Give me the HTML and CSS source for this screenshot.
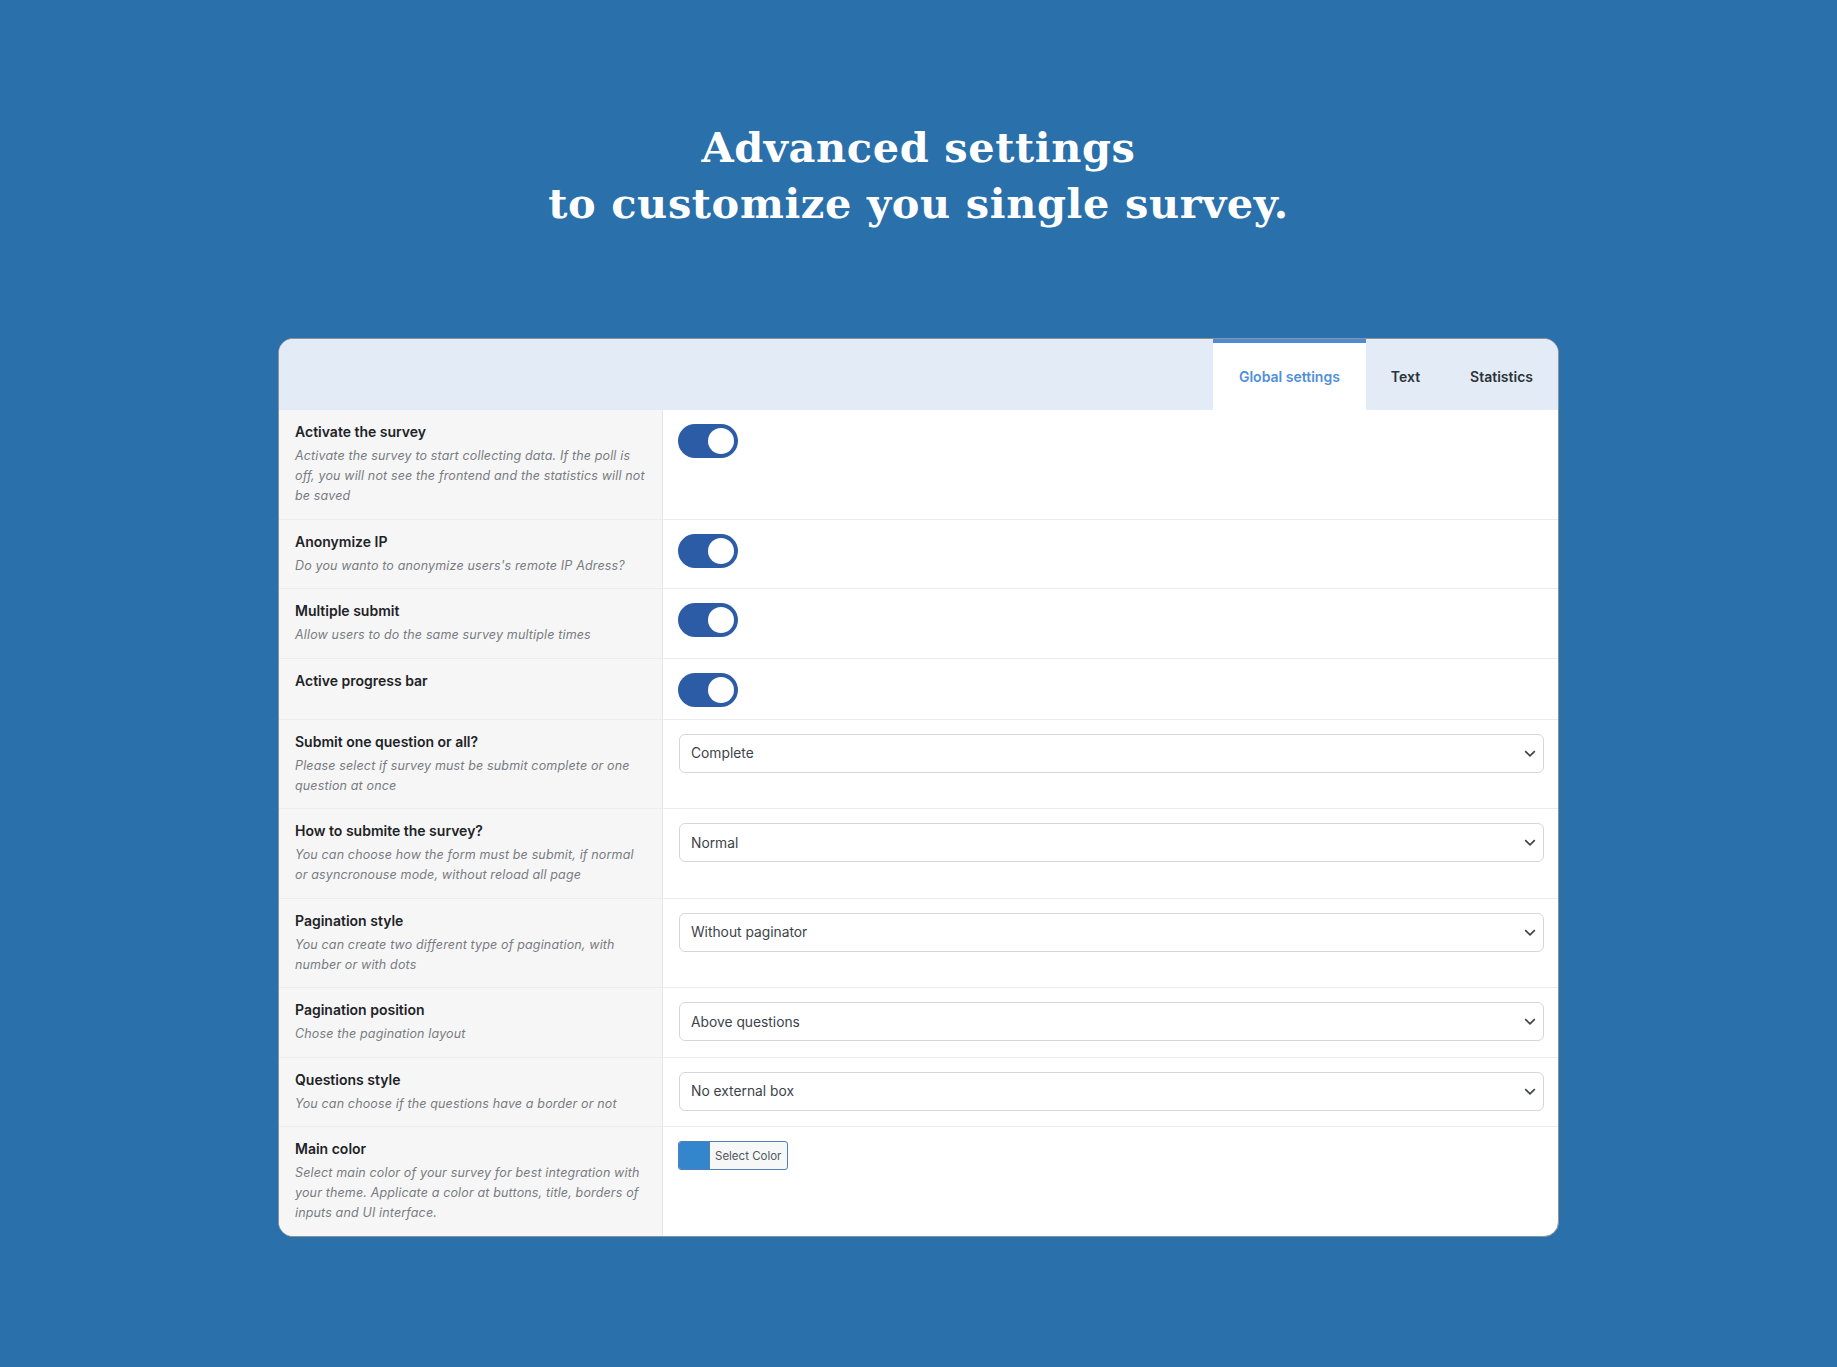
FILE: index.html
```html
<!DOCTYPE html>
<html lang="en">
<head>
<meta charset="utf-8">
<title>Advanced settings</title>
<link rel="stylesheet" href="styles.css">
</head>
<body>
<header class="hero">
  <h1 class="hero-title">Advanced settings<br>to customize you single survey.</h1>
</header>

<main class="card">
  <div class="card-head">
    <nav class="tabs">
      <span class="tab tab-active">Global settings</span>
      <span class="tab">Text</span>
      <span class="tab">Statistics</span>
    </nav>
  </div>

  <div class="rows">
    <div class="row">
      <div class="cell-label">
        <div class="label">Activate the survey</div>
        <div class="desc">Activate the survey to start collecting data. If the poll is off, you will not see the frontend and the statistics will not be saved</div>
      </div>
      <div class="cell-field"><span class="toggle"><span class="knob"></span></span></div>
    </div>

    <div class="row">
      <div class="cell-label">
        <div class="label">Anonymize IP</div>
        <div class="desc">Do you wanto to anonymize users's remote IP Adress?</div>
      </div>
      <div class="cell-field"><span class="toggle"><span class="knob"></span></span></div>
    </div>

    <div class="row">
      <div class="cell-label">
        <div class="label">Multiple submit</div>
        <div class="desc">Allow users to do the same survey multiple times</div>
      </div>
      <div class="cell-field"><span class="toggle"><span class="knob"></span></span></div>
    </div>

    <div class="row">
      <div class="cell-label">
        <div class="label">Active progress bar</div>
      </div>
      <div class="cell-field"><span class="toggle"><span class="knob"></span></span></div>
    </div>

    <div class="row">
      <div class="cell-label">
        <div class="label">Submit one question or all?</div>
        <div class="desc">Please select if survey must be submit complete or one question at once</div>
      </div>
      <div class="cell-field">
        <div class="select"><span>Complete</span><svg class="chev" width="12" height="7" viewBox="0 0 12 7"><path d="M1.2 1.2L6 5.8l4.8-4.6" fill="none" stroke="#3c434a" stroke-width="1.7"/></svg></div>
      </div>
    </div>

    <div class="row">
      <div class="cell-label">
        <div class="label">How to submite the survey?</div>
        <div class="desc">You can choose how the form must be submit, if normal or asyncronouse mode, without reload all page</div>
      </div>
      <div class="cell-field">
        <div class="select"><span>Normal</span><svg class="chev" width="12" height="7" viewBox="0 0 12 7"><path d="M1.2 1.2L6 5.8l4.8-4.6" fill="none" stroke="#3c434a" stroke-width="1.7"/></svg></div>
      </div>
    </div>

    <div class="row">
      <div class="cell-label">
        <div class="label">Pagination style</div>
        <div class="desc">You can create two different type of pagination, with number or with dots</div>
      </div>
      <div class="cell-field">
        <div class="select"><span>Without paginator</span><svg class="chev" width="12" height="7" viewBox="0 0 12 7"><path d="M1.2 1.2L6 5.8l4.8-4.6" fill="none" stroke="#3c434a" stroke-width="1.7"/></svg></div>
      </div>
    </div>

    <div class="row">
      <div class="cell-label">
        <div class="label">Pagination position</div>
        <div class="desc">Chose the pagination layout</div>
      </div>
      <div class="cell-field">
        <div class="select"><span>Above questions</span><svg class="chev" width="12" height="7" viewBox="0 0 12 7"><path d="M1.2 1.2L6 5.8l4.8-4.6" fill="none" stroke="#3c434a" stroke-width="1.7"/></svg></div>
      </div>
    </div>

    <div class="row">
      <div class="cell-label">
        <div class="label">Questions style</div>
        <div class="desc">You can choose if the questions have a border or not</div>
      </div>
      <div class="cell-field">
        <div class="select"><span>No external box</span><svg class="chev" width="12" height="7" viewBox="0 0 12 7"><path d="M1.2 1.2L6 5.8l4.8-4.6" fill="none" stroke="#3c434a" stroke-width="1.7"/></svg></div>
      </div>
    </div>

    <div class="row row-last">
      <div class="cell-label">
        <div class="label">Main color</div>
        <div class="desc">Select main color of your survey for best integration with your theme. Applicate a color at buttons, title, borders of inputs and UI interface.</div>
      </div>
      <div class="cell-field">
        <span class="color-btn"><span class="swatch"></span><span class="color-text">Select Color</span></span>
      </div>
    </div>
  </div>
</main>
</body>
</html>
```

FILE: styles.css
```css
html {
  background: #2a70ab;
}

body {
  margin: 0;
  min-height: 1367px;
  background: #2a70ab;
  font-family: Inter, "Noto Sans", "DejaVu Sans", sans-serif;
  color: #1d2327;
}

.hero {
  padding-top: 120px;
  text-align: center;
}

.hero-title {
  margin: 0;
  font-family: "DejaVu Serif", "Liberation Serif", serif;
  font-weight: 700;
  font-size: 41.5px;
  line-height: 56px;
  color: #ffffff;
  letter-spacing: 0.6px;
}

.card {
  width: 1281px;
  box-sizing: border-box;
  margin: 106px auto 0;
  border: 1px solid #8d9299;
  border-radius: 15px;
  overflow: hidden;
  background: #ffffff;
}

.card-head {
  height: 71px;
  background: #e3ebf6;
  display: flex;
  justify-content: flex-end;
}

.tabs {
  display: flex;
}

.tab {
  display: flex;
  align-items: center;
  padding: 4px 25px 0;
  font-size: 14px;
  font-weight: 600;
  color: #2c3338;
}

.tab-active {
  background: #ffffff;
  color: #4f8fdc;
  border-top: 4px solid #4f8ad6;
  padding: 0 26px;
}

.rows {
  display: flex;
  flex-direction: column;
}

.row {
  display: grid;
  grid-template-columns: 384px 1fr;
  border-bottom: 1px solid #ececec;
}

.row-last {
  border-bottom: none;
}

.cell-label {
  background: #f6f6f6;
  border-right: 1px solid #e6e6e6;
  padding: 12px 14px 12.5px 16px;
}

.label {
  font-size: 14px;
  font-weight: 600;
  line-height: 20px;
  color: #1d2327;
}

.desc {
  margin-top: 4px;
  font-size: 12.5px;
  line-height: 20px;
  font-style: italic;
  letter-spacing: 0.15px;
  color: #787c82;
}

.cell-field {
  padding: 14px 14px 12px 15px;
}

.toggle {
  display: flex;
  justify-content: flex-end;
  align-items: center;
  width: 60px;
  height: 34px;
  box-sizing: border-box;
  padding-right: 4px;
  border-radius: 17px;
  background: #2b5ca5;
}

.knob {
  width: 26px;
  height: 26px;
  border-radius: 50%;
  background: #ffffff;
}

.select {
  display: flex;
  align-items: center;
  justify-content: space-between;
  height: 37px;
  margin-left: 1px;
  padding: 0 7px 0 11px;
  border: 1px solid #d3d6db;
  border-radius: 6px;
  background: #ffffff;
  font-size: 13.8px;
  color: #3c434a;
}

.chev {
  display: block;
}

.color-btn {
  display: inline-flex;
  height: 29px;
  box-sizing: border-box;
  border: 1px solid #4f7fbf;
  border-radius: 3px;
  overflow: hidden;
  background: #f6f7f7;
}

.swatch {
  width: 30px;
  background: #3385cc;
  border-right: 1px solid #4f7fbf;
}

.color-text {
  display: flex;
  align-items: center;
  padding: 0 6px 0 5px;
  font-size: 11.5px;
  color: #50575e;
}
```
